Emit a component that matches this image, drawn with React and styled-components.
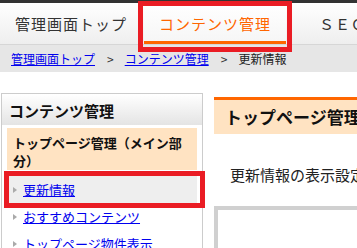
import styled, { createGlobalStyle } from 'styled-components';

const GlobalStyle = createGlobalStyle`
  html, body {
    margin: 0;
    padding: 0;
    background: #fff;
    overflow: hidden;
  }
  body {
    font-family: "Noto Sans CJK JP", "Noto Sans", sans-serif;
    color: #222;
  }
`;

const Page = styled.div`
  position: relative;
  width: 900px;
`;

const TopStrip = styled.div`
  height: 3px;
  background: #333;
`;

const Nav = styled.nav`
  display: flex;
  gap: 2px;
  height: 41px;
  background: linear-gradient(#ffffff, #eeeeee);
  border-bottom: 1px solid #d6d6d6;
`;

const Tab = styled.a`
  box-sizing: border-box;
  width: 142px;
  display: flex;
  align-items: center;
  justify-content: center;
  font-size: 15px;
  letter-spacing: 1px;
  color: ${(p) => (p.$active ? '#ff6600' : '#333')};
  background: ${(p) => (p.$active ? 'linear-gradient(#ffffff, #f6f6f6)' : 'transparent')};
  border-bottom: 3px solid ${(p) => (p.$active ? '#ff6600' : 'transparent')};
  padding-top: 3px;
`;

const Crumbs = styled.div`
  display: flex;
  align-items: center;
  height: 27px;
  padding-left: 11px;
  background: #e6e6e6;
  font-size: 12px;
`;

const CrumbLink = styled.a`
  color: #0000ee;
  text-decoration: underline;
`;

const Sep = styled.span`
  margin: 0 11px 0 12px;
  color: #333;
`;

const Current = styled.span`
  color: #222;
`;

const Body = styled.div`
  display: flex;
  align-items: flex-start;
  padding: 21px 0 0 1px;
`;

const Sidebar = styled.aside`
  width: 200px;
  height: 300px;
  border: 1px solid #ccc;
  flex-shrink: 0;
`;

const SideHead = styled.h2`
  margin: 0;
  height: 31px;
  line-height: 33px;
  padding-left: 7px;
  font-size: 15px;
  font-weight: bold;
  color: #111;
  background: linear-gradient(#ffffff, #e4e4e4);
`;

const Group = styled.div`
  margin: 3px 5px 0;
  padding: 6px 6px 0;
  background: #ffe3c2;
  font-size: 13px;
  font-weight: bold;
  line-height: 18px;
  color: #111;
`;

const List = styled.ul`
  list-style: none;
  margin: 6px 5px 0;
  padding: 0;
`;

const Item = styled.li`
  display: flex;
  align-items: center;
  height: 27px;
  padding-left: 6px;
  font-size: 13px;
  background: ${(p) => (p.$current ? '#eeeeee' : 'transparent')};

  &::before {
    content: '';
    width: 0;
    height: 0;
    border-left: 4px solid #aaa;
    border-top: 3px solid transparent;
    border-bottom: 3px solid transparent;
    margin-right: 6px;
  }

  a {
    color: #0000ee;
    text-decoration: underline;
  }
`;

const Main = styled.main`
  margin-left: 11px;
  width: 640px;
  margin-top: 4px;
`;

const MainHead = styled.h1`
  margin: 0;
  height: 34px;
  line-height: 34px;
  padding-left: 11px;
  border-top: 3px solid #ff6600;
  background: #ffe3c2;
  font-size: 17px;
  font-weight: bold;
  color: #111;
`;

const Lead = styled.p`
  margin: 31px 0 0 16px;
  font-size: 15px;
  line-height: 20px;
  color: #222;
`;

const Panel = styled.div`
  margin-top: 21px;
  height: 200px;
  border: 4px solid #d0d0d0;
`;

const Mark = styled.div`
  position: absolute;
  left: ${(p) => p.$x}px;
  top: ${(p) => p.$y}px;
  width: ${(p) => p.$w}px;
  height: ${(p) => p.$h}px;
  box-sizing: border-box;
  border: 5px solid #ea1c24;
  pointer-events: none;
`;

export default function App() {
  return (
    <Page>
      <GlobalStyle />
      <TopStrip />
      <Nav>
        <Tab>管理画面トップ</Tab>
        <Tab $active>コンテンツ管理</Tab>
        <Tab>ＳＥＯ対策</Tab>
        <Tab>各種設定</Tab>
      </Nav>
      <Crumbs>
        <CrumbLink href="#">管理画面トップ</CrumbLink>
        <Sep>&gt;</Sep>
        <CrumbLink href="#">コンテンツ管理</CrumbLink>
        <Sep>&gt;</Sep>
        <Current>更新情報</Current>
      </Crumbs>
      <Body>
        <Sidebar>
          <SideHead>コンテンツ管理</SideHead>
          <Group>トップページ管理（メイン部分）</Group>
          <List>
            <Item $current><a href="#">更新情報</a></Item>
            <Item><a href="#">おすすめコンテンツ</a></Item>
            <Item><a href="#">トップページ物件表示</a></Item>
          </List>
        </Sidebar>
        <Main>
          <MainHead>トップページ管理（メイン部分）</MainHead>
          <Lead>更新情報の表示設定を行います。</Lead>
          <Panel />
        </Main>
      </Body>
      <Mark $x={138} $y={1} $w={154} $h={51} />
      <Mark $x={4} $y={171} $w={201} $h={37} />
    </Page>
  );
}
